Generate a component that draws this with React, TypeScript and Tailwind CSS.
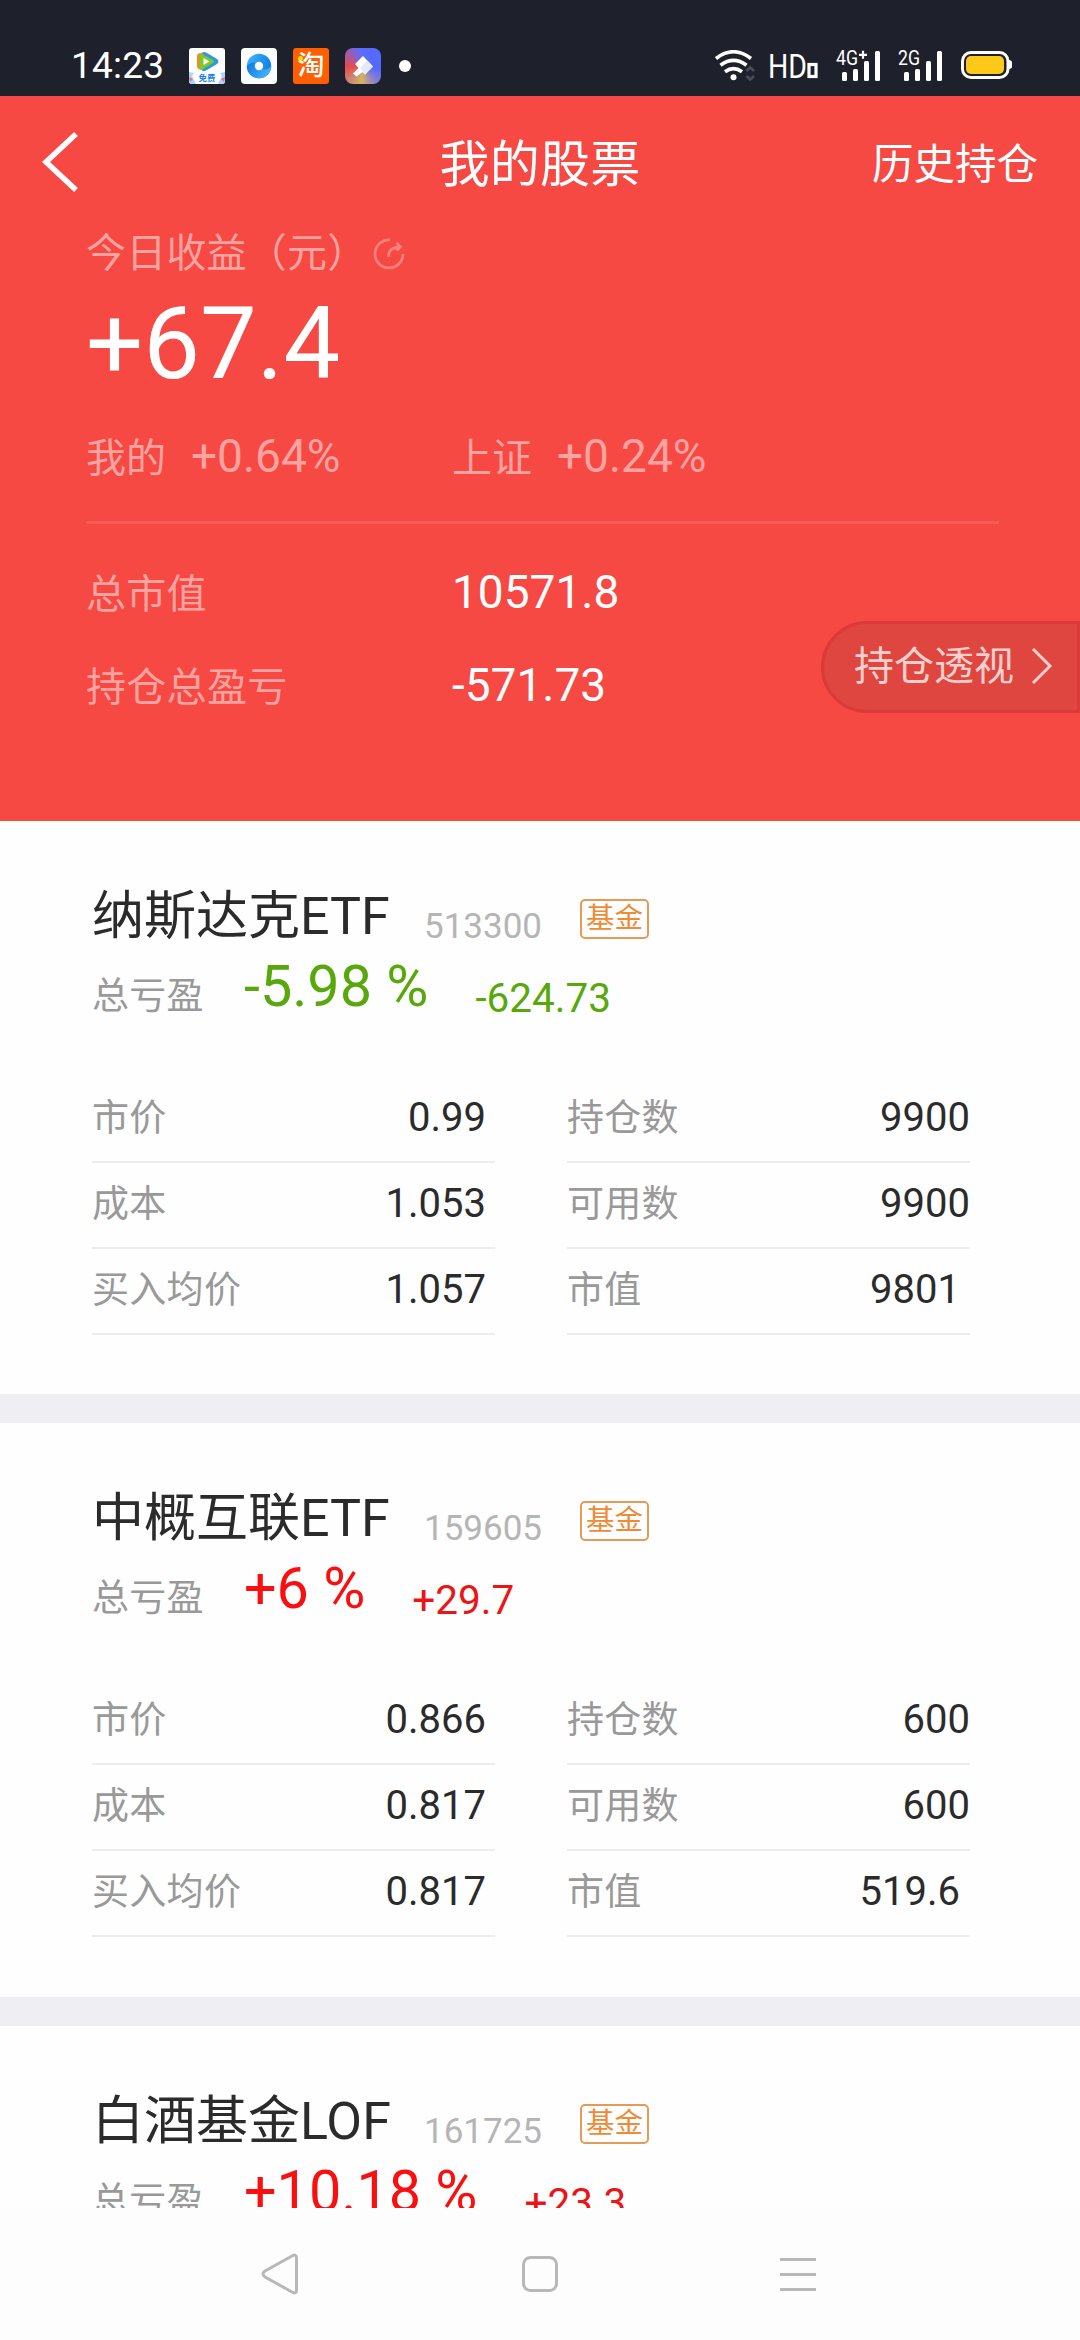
import React from 'react';

interface Holding {
  name: string;
  code: string;
  percent: string;
  amount: string;
  down?: boolean;
  left: [string, string][];
  right: [string, string][];
}

const holdings: Holding[] = [
  {
    name: '纳斯达克ETF',
    code: '513300',
    percent: '-5.98 %',
    amount: '-624.73',
    down: true,
    left: [['市价', '0.99'], ['成本', '1.053'], ['买入均价', '1.057']],
    right: [['持仓数', '9900'], ['可用数', '9900'], ['市值', '9801']],
  },
  {
    name: '中概互联ETF',
    code: '159605',
    percent: '+6 %',
    amount: '+29.7',
    left: [['市价', '0.866'], ['成本', '0.817'], ['买入均价', '0.817']],
    right: [['持仓数', '600'], ['可用数', '600'], ['市值', '519.6']],
  },
  {
    name: '白酒基金LOF',
    code: '161725',
    percent: '+10.18 %',
    amount: '+23.3',
    left: [],
    right: [],
  },
];

const VideoIcon = () => (
  <svg width="36" height="36" viewBox="0 0 36 36">
    <rect width="36" height="36" rx="3" fill="#fff" />
    <path d="M13 4.500 Q15 3.500 18 5 L28 11 Q31 13.500 28 16 L18 22 Q15 24 13 22.500 Z" fill="#2f97e8" />
    <path d="M8 8 Q8 4.500 14 5 V22 Q8 22 8 18 Z" fill="#f58a1f" />
    <path d="M10.500 7 Q11.500 5.500 14 6.500 L24 12 Q26 13.500 24 15 L14 21 Q11.500 22 10.500 20.500 Z" fill="#7cc92a" />
    <path d="M14.500 10 L20.500 13.500 L14.500 17 Z" fill="#fff" />
    <path d="M0 24 L5 25 L3 28 L7 36 H3 Q0 36 0 33 Z M36 24 L31 25 L33 28 L29 36 H33 Q36 36 36 33 Z" fill="#a9d6fb" />
    <path d="M0 29 L4 31 L1 34 Z M36 29 L32 31 L35 34 Z" fill="#ef6f86" />
    <text x="18" y="32.500" textAnchor="middle" fontSize="8.500" fontWeight="700" fill="#1c7fe6">免费</text>
  </svg>
);

const RingIcon = () => (
  <svg width="36" height="36" viewBox="0 0 36 36">
    <defs>
      <linearGradient id="ring" x1="0" y1="0" x2="1" y2="0.400">
        <stop offset="0" stopColor="#4ab6f8" />
        <stop offset="1" stopColor="#0f7fe8" />
      </linearGradient>
      <linearGradient id="ringLow" x1="0" y1="0" x2="1" y2="0.400">
        <stop offset="0" stopColor="#0a78e6" />
        <stop offset="1" stopColor="#45b0f7" />
      </linearGradient>
    </defs>
    <rect width="36" height="36" rx="4" fill="#fbfcfd" />
    <circle cx="18" cy="18" r="12.200" fill="url(#ring)" />
    <path d="M5.800 18 Q12 11 18 18 T30.200 18 A12.200 12.200 0 0 1 5.800 18 Z" fill="url(#ringLow)" />
    <circle cx="18" cy="18" r="4.200" fill="#fff" />
  </svg>
);

const TaoIcon = () => (
  <div className="relative flex h-9 w-9 items-center justify-center rounded-[3px] bg-[#ff5f00]">
    <span className="text-[27px] leading-9 font-medium">淘</span>
    <span className="absolute top-2 left-[5px] h-[5px] w-[5px] rounded-full bg-[#ffe600]" />
  </div>
);

const BrushIcon = () => (
  <div className="flex h-9 w-9 items-center justify-center rounded-[8px] bg-[conic-gradient(from_0deg,#5b6cff_0deg,#5068ff_100deg,#8a7fd0_140deg,#d9b45f_185deg,#c98a78_220deg,#ea4a4a_265deg,#a05aa8_310deg,#5b6cff_350deg)]">
    <svg width="36" height="36" viewBox="0 0 36 36">
      <path d="M18 8 L28 18.500 L20 26.500 L17.500 24 L11.500 28.500 L8 25.500 L13.500 20 L10 16 Z" fill="#fff" />
      <path d="M15 20 L22.500 12.500 L28 18.500 L20 26.500 Z" fill="#e6e9fb" />
    </svg>
  </div>
);

const WifiIcon = () => (
  <svg width="42" height="32" viewBox="0 0 42 32" fill="none">
    <path d="M1 8.500 Q18.500 -5 36 8.500" stroke="#fff" strokeWidth="3.600" />
    <path d="M5.500 15.200 Q18.500 5.500 31.500 15.200" stroke="#fff" strokeWidth="3.600" />
    <path d="M10 21.700 Q18.500 15.500 27 21.700" stroke="#fff" strokeWidth="3.600" />
    <circle cx="18.500" cy="27.200" r="3" fill="#fff" />
    <path d="M31.500 21 L35.200 17.500 L39 21 M31.500 26 L35.200 29.500 L39 26" stroke="#4a4d58" strokeWidth="2.600" />
  </svg>
);

const SignalIcon: React.FC<{ label: string; plus?: boolean }> = ({ label, plus }) => (
  <svg className="overflow-visible" width="46" height="32" viewBox="0 0 46 32">
    <text x="0" y="15" fontSize="19.500" textLength="22" lengthAdjust="spacingAndGlyphs" fill="#fff">{label}</text>
    {plus && <path d="M23 4.800 H31 M27 0.800 V8.800" stroke="#fff" strokeWidth="2.200" />}
    <rect x="6" y="22" width="5" height="9" rx="1.500" fill="#fff" />
    <rect x="17" y="19" width="5" height="12" rx="1.500" fill="#fff" />
    <rect x="28" y="11" width="5" height="20" rx="1.500" fill="#fff" />
    <rect x="39" y="1" width="5" height="30" rx="1.500" fill="#fff" />
  </svg>
);

const BatteryIcon = () => (
  <svg width="52" height="30" viewBox="0 0 52 30">
    <rect x="1.500" y="2.500" width="45.500" height="25" rx="8.500" fill="none" stroke="#fff" strokeWidth="3" />
    <path d="M48 10 Q51 10.500 51 12.500 V16.500 Q51 18.500 48 19 Z" fill="#fff" />
    <rect x="5" y="6" width="38" height="18" rx="5" fill="#ffc91a" />
  </svg>
);

const StatusBar = () => (
  <div className="flex h-24 shrink-0 items-start bg-[#1e212b] pt-12 text-white">
    <span className="ml-[71px] w-[118px] text-[37px] leading-9 tracking-[0.2px]">14:23</span>
    <div className="flex gap-4">
      <VideoIcon />
      <RingIcon />
      <TaoIcon />
      <BrushIcon />
    </div>
    <span className="mt-3 ml-[18px] h-3 w-3 rounded-full bg-white" />
    <div className="mt-[2px] ml-auto flex items-start pr-[67px]">
      <WifiIcon />
      <svg className="ml-[11px] overflow-visible" width="52" height="32" viewBox="0 0 52 32">
        <text x="0" y="28" fontSize="34" textLength="39" lengthAdjust="spacingAndGlyphs" fill="#fff">HD</text>
        <rect x="41" y="14.500" width="7" height="12" fill="none" stroke="#fff" strokeWidth="3.200" />
      </svg>
      <div className="ml-[16px]"><SignalIcon label="4G" plus /></div>
      <div className="ml-4"><SignalIcon label="2G" /></div>
      <div className="ml-[17px]"><BatteryIcon /></div>
    </div>
  </div>
);

const Summary = () => (
  <div className="relative h-[724.5px] shrink-0 bg-[#f64944] text-white">
    <div className="grid h-[140px] grid-cols-3 items-center">
      <svg className="-mt-2 ml-10" width="40" height="64" viewBox="0 0 40 64" fill="none">
        <path d="M36 4 L6 32 L36 60" stroke="#fff" strokeWidth="5.500" />
      </svg>
      <h1 className="-mt-[2px] text-center text-[50px] leading-[60px] tracking-[0.2px]">我的股票</h1>
      <span className="-mt-[2px] pr-[42px] text-right text-[41.5px] leading-[60px]">历史持仓</span>
    </div>
    <div className="px-[86px]">
      <div className="flex h-9 items-center text-[#ffa3a0]">
        <span className="text-[40px] leading-9 tracking-[0.2px] whitespace-nowrap">今日收益（元）</span>
        <svg className="ml-[6px] opacity-60" width="32" height="32" viewBox="0 0 32 32" fill="none" stroke="#ffa3a0" strokeWidth="2.800">
          <path d="M17 2 A14 14 0 1 0 30 16" />
          <path d="M15.500 19 Q15 9.500 27 9 M23.500 5 L27.500 9 L23.500 12.500" />
        </svg>
      </div>
      <div className="mt-[22px] text-[101px] leading-[100px]">+67.4</div>
      <div className="mt-[32px] flex h-[60px] text-[46px] leading-[60px] text-[#ffa3a0]">
        <div className="flex w-[366px] items-baseline">
          <span className="w-[105px] text-[40px]">我的</span>
          <span>+0.64%</span>
        </div>
        <div className="flex items-baseline">
          <span className="w-[105px] text-[40px]">上证</span>
          <span>+0.24%</span>
        </div>
      </div>
      <div className="mt-[35px] h-[3px] w-[913px] bg-[#f95a56]" />
      <div className="mt-[38px] flex h-[60px] items-baseline text-[46px] leading-[60px]">
        <span className="w-[366px] text-[40px] tracking-[0.3px] text-[#ffa3a0]">总市值</span>
        <span>10571.8</span>
      </div>
      <div className="mt-[33px] flex h-[60px] items-baseline text-[46px] leading-[60px]">
        <span className="w-[366px] text-[40px] tracking-[0.3px] text-[#ffa3a0]">持仓总盈亏</span>
        <span>-571.73</span>
      </div>
    </div>
    {/* floating button pinned to the right edge */}
    <div className="absolute top-[525px] right-0 flex h-[92px] w-[259px] items-center rounded-l-full border-[3px] border-[#db3a38] bg-[#df463f] pl-[30px] text-[#fbcfcd]">
      <span className="text-[40px] leading-[60px]">持仓透视</span>
      <svg className="ml-[16px]" width="24" height="40" viewBox="0 0 24 40" fill="none">
        <path d="M3 2 L20 19 L3 36" stroke="#fbcfcd" strokeWidth="3" />
      </svg>
    </div>
  </div>
);

const Column: React.FC<{ rows: [string, string][]; side: 'left' | 'right' }> = ({ rows, side }) => (
  <div className="w-[403px]">
    {rows.map(([label, value], i) => (
      <div key={label} className="flex h-[86px] justify-between border-b-2 border-[#ededed]">
        <span className="text-[37px] leading-[83px] tracking-[0.3px] text-[#999]">{label}</span>
        <span className={`text-[40px] leading-[81px] text-[#2b2b2b] ${side === 'left' ? 'pr-[9px]' : i === 2 ? 'pr-[10px]' : ''}`}>
          {value}
        </span>
      </div>
    ))}
  </div>
);

const HoldingCard: React.FC<{ item: Holding }> = ({ item }) => (
  <div className="h-[602.5px] shrink-0 border-b-[29px] border-[#efeef3] pt-[66px] pl-[92px]">
    <div className="flex h-[60px] items-start">
      <span className="w-[332px] text-[52px] leading-[60px] whitespace-nowrap text-[#2b2b2b]">{item.name}</span>
      <span className="mt-[10px] w-[156px] text-[35px] leading-[60px] text-[#b5b5b5]">{item.code}</span>
      <span className="mt-[12px] flex h-10 w-[69px] items-center justify-center rounded-[5px] border-2 border-[#e59a58] text-[28.5px] leading-9 text-[#ee8b35]">
        基金
      </span>
    </div>
    <div className={`mt-[10px] flex h-[60px] items-start leading-[60px] ${item.down ? 'text-[#58a80c]' : 'text-[#fa0f10]'}`}>
      <span className="mt-[10px] w-[152px] text-[37px] tracking-[0.3px] text-[#999]">总亏盈</span>
      <span className="text-[57.5px] whitespace-pre">{item.percent}</span>
      <span className={`mt-[11px] ml-[47px] text-[40.5px] ${item.down ? '' : 'text-[#ea1516]'}`}>{item.amount}</span>
    </div>
    <div className="mt-[60px] flex gap-[72px]">
      <Column rows={item.left} side="left" />
      <Column rows={item.right} side="right" />
    </div>
  </div>
);

const NavBar = () => (
  <div className="flex h-[132px] shrink-0 justify-between bg-[#fdfdfd] px-[260px] pt-[44px]">
    <svg width="40" height="44" viewBox="0 0 40 44" fill="none" stroke="#b8b8b8" strokeWidth="3">
      <path d="M32 4 Q36.500 1.500 36.500 6 V38 Q36.500 42.500 32 40 L5 25 Q1 22 5 19 Z" />
    </svg>
    <svg width="40" height="44" viewBox="0 0 40 44" fill="none" stroke="#b8b8b8" strokeWidth="3">
      <rect x="3.500" y="5.500" width="33" height="33" rx="7" />
    </svg>
    <svg width="40" height="44" viewBox="0 0 40 44" stroke="#b8b8b8" strokeWidth="3">
      <path d="M0 7.500 H36 M0 22.500 H36 M0 37.500 H36" />
    </svg>
  </div>
);

const App: React.FC = () => {
  return (
    <div className="flex h-[2340px] w-[1080px] flex-col overflow-hidden bg-[#fefefe] font-['Roboto','Noto_Sans_CJK_SC',sans-serif]">
      <StatusBar />
      <Summary />
      <div className="min-h-0 flex-1 overflow-hidden">
        {holdings.map((item) => (
          <HoldingCard key={item.code} item={item} />
        ))}
      </div>
      <NavBar />
    </div>
  );
};

export default App;
